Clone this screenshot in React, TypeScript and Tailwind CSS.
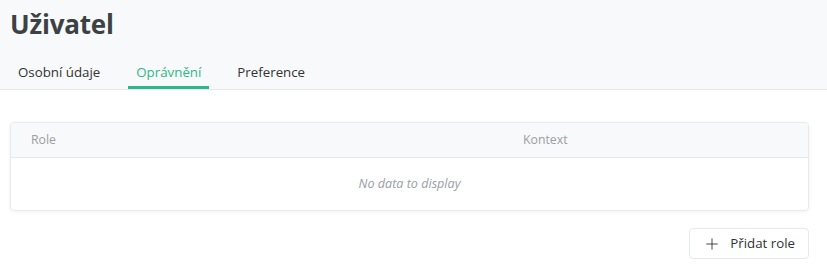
import { Plus } from "lucide-react";

const tabs = ["Osobní údaje", "Oprávnění", "Preference"];

export default function App() {
  const active = "Oprávnění";

  return (
    <div
      className="w-[827px] h-[276px] bg-white text-[#333]"
      style={{ fontFamily: '"Open Sans", "Noto Sans", sans-serif' }}
    >
      <div className="bg-[#f8f9fa] border-b border-[#e6e8eb] pl-[10px]">
        <h1 className="pt-[6px] text-[26px] leading-[36px] font-bold text-[#3c4146] tracking-[-0.2px]">
          Uživatel
        </h1>
        <div className="flex mt-[16px] gap-[20px]">
          {tabs.map((t) => (
            <div
              key={t}
              className={`px-[8px] h-[31px] pt-[4px] text-[13.3px] leading-[20px] border-b-[3px] ${
                t === active
                  ? "border-[#2eb886] text-[#2eb886]"
                  : "border-transparent text-[#333]"
              }`}
            >
              {t}
            </div>
          ))}
        </div>
      </div>

      <div className="pl-[10px] pr-[18px] pt-[32px]">
        <div className="rounded-[4px] border border-[#e8eaed] shadow-[0_1px_4px_rgba(0,0,0,0.06)] overflow-hidden">
          <div className="grid grid-cols-[492px_1fr] h-[35px] items-center bg-[#f8f9fa] border-b border-[#e6e8eb] text-[12.3px] text-[#9a9ea4]">
            <div className="pl-[20px]">Role</div>
            <div className="pl-[20px]">Kontext</div>
          </div>
          <div className="h-[52px] flex items-center justify-center text-[12.6px] italic text-[#9a9ea4]">
            No data to display
          </div>
        </div>

        <div className="flex justify-end mt-[17px]">
          <button
            type="button"
            className="h-[31px] px-[13px] flex items-center gap-[9px] rounded-[4px] border border-[#e6e8eb] bg-white text-[13.3px] text-[#333]"
          >
            <Plus size={18} strokeWidth={1.2} className="text-[#333]" />
            Přidat role
          </button>
        </div>
      </div>
    </div>
  );
}
